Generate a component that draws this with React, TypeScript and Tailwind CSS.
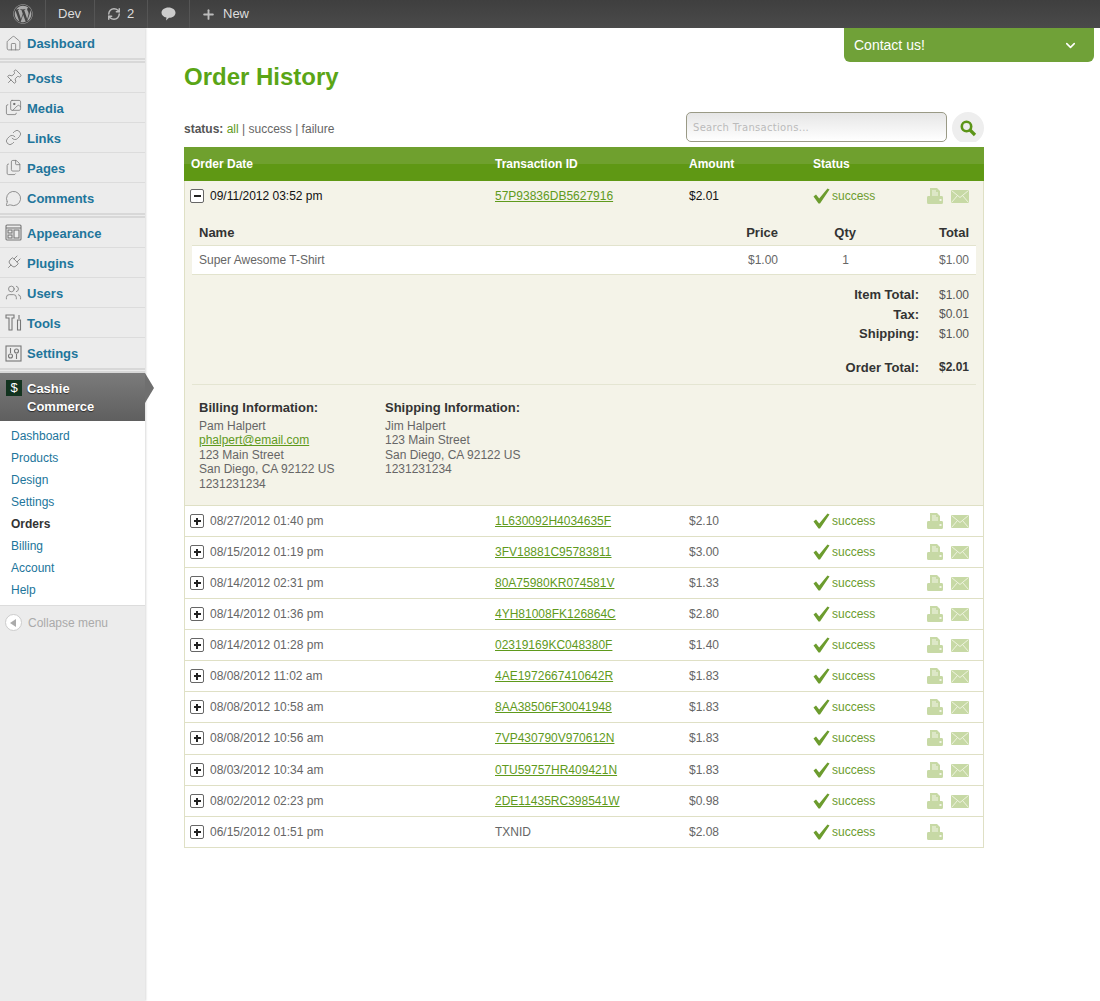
import { FC, ReactNode } from "react";
import {
  ChevronDown, Plus, RefreshCw, House, Pin, Images, Link, Files, MessageCircle, Plug, Users,
} from "lucide-react";
import { FaWordpress } from "react-icons/fa";

const orders = [
  { date: "08/27/2012 01:40 pm", id: "1L630092H4034635F", amount: "$2.10" },
  { date: "08/15/2012 01:19 pm", id: "3FV18881C95783811", amount: "$3.00" },
  { date: "08/14/2012 02:31 pm", id: "80A75980KR074581V", amount: "$1.33" },
  { date: "08/14/2012 01:36 pm", id: "4YH81008FK126864C", amount: "$2.80" },
  { date: "08/14/2012 01:28 pm", id: "02319169KC048380F", amount: "$1.40" },
  { date: "08/08/2012 11:02 am", id: "4AE1972667410642R", amount: "$1.83" },
  { date: "08/08/2012 10:58 am", id: "8AA38506F30041948", amount: "$1.83" },
  { date: "08/08/2012 10:56 am", id: "7VP430790V970612N", amount: "$1.83", tall: true },
  { date: "08/03/2012 10:34 am", id: "0TU59757HR409421N", amount: "$1.83" },
  { date: "08/02/2012 02:23 pm", id: "2DE11435RC398541W", amount: "$0.98" },
  { date: "06/15/2012 01:51 pm", id: "TXNID", amount: "$2.08", plain: true },
];

const AppearanceIcon = () => (
  <svg width="17" height="17" viewBox="0 0 17 17" fill="none" stroke="#777" strokeWidth="1.1">
    <rect x="1" y="1" width="15" height="15" rx="1" />
    <path d="M1 4 H16" />
    <rect x="3" y="6" width="4" height="3" />
    <rect x="3" y="11" width="4" height="3" />
    <rect x="9" y="6" width="5" height="8" />
  </svg>
);

const ToolsIcon = () => (
  <svg width="17" height="17" viewBox="0 0 17 17" fill="none" stroke="#777" strokeWidth="1.1">
    <path d="M1 1 H9 V4 H7 V16 H4 V4 H1 Z" />
    <path d="M14 1 V5 M12.5 6 H15.5 V16 H12.5 Z" />
  </svg>
);

const SettingsIcon = () => (
  <svg width="17" height="17" viewBox="0 0 17 17" fill="none" stroke="#777" strokeWidth="1.1">
    <rect x="1" y="1" width="15" height="15" />
    <path d="M5.5 3 V8 M11.5 9 V14" />
    <circle cx="5.5" cy="11" r="2" />
    <circle cx="11.5" cy="6" r="2" />
  </svg>
);

const iconProps = { size: 17, strokeWidth: 1.1, color: "#777" };

const menuGroups: { label: string; icon: ReactNode }[][] = [
  [{ label: "Dashboard", icon: <House {...iconProps} /> }],
  [
    { label: "Posts", icon: <Pin {...iconProps} className="rotate-45" /> },
    { label: "Media", icon: <Images {...iconProps} /> },
    { label: "Links", icon: <Link {...iconProps} /> },
    { label: "Pages", icon: <Files {...iconProps} /> },
    { label: "Comments", icon: <MessageCircle {...iconProps} /> },
  ],
  [
    { label: "Appearance", icon: <AppearanceIcon /> },
    { label: "Plugins", icon: <Plug {...iconProps} className="rotate-45" /> },
    { label: "Users", icon: <Users {...iconProps} /> },
    { label: "Tools", icon: <ToolsIcon /> },
    { label: "Settings", icon: <SettingsIcon /> },
  ],
];

const subMenu = ["Dashboard", "Products", "Design", "Settings", "Orders", "Billing", "Account", "Help"];

const CheckIcon = () => (
  <svg width="17" height="16" viewBox="0 0 17 16" className="shrink-0">
    <path d="M0.5 8.5 L3 6.5 L6.2 10.5 L14.5 0.5 L16.5 1.5 L7 15.5 L5.5 15.5 Z" fill="#6c9c2e" />
  </svg>
);

const PrintIcon = () => (
  <svg width="16" height="16" viewBox="0 0 16 16" className="shrink-0">
    <path d="M3 0 H10 L13 3 V8 H15 Q16 8 16 9.5 V14.5 Q16 16 14.5 16 H1.5 Q0 16 0 14.5 V9.5 Q0 8 1 8 H3 Z" fill="#c7d9a5" />
    <path d="M5 3 H9 M5 5 H11 M5 7 H11" stroke="#f3f6e8" strokeWidth="1" />
    <rect x="12.5" y="11" width="2" height="2" fill="#f3f6e8" />
  </svg>
);

const MailIcon = () => (
  <svg width="18" height="13" viewBox="0 0 18 13" className="shrink-0">
    <rect width="18" height="13" fill="#c7d9a5" />
    <path d="M0.5 0.5 L9 7.5 L17.5 0.5 M0.5 12.5 L6.5 5.5 M17.5 12.5 L11.5 5.5" stroke="#eef3df" strokeWidth="1" fill="none" />
  </svg>
);

const ToggleBox: FC<{ open?: boolean }> = ({ open }) => (
  <span className="w-[14px] h-[14px] shrink-0 border border-[#666] rounded-[2px] bg-white flex items-center justify-center">
    <span className="relative w-[7px] h-[2px] bg-[#222]">
      {!open && <span className="absolute left-[2.5px] top-[-2.5px] w-[2px] h-[7px] bg-[#222]" />}
    </span>
  </span>
);

const OrderCells: FC<{ date: string; id: string; amount: string; open?: boolean; plain?: boolean; noMail?: boolean }> = ({ date, id, amount, open, plain, noMail }) => (
  <>
    <div className="w-[305px] flex items-center gap-[6px]">
      <ToggleBox open={open} />
      <span className={open ? "text-[#111]" : "text-[#666]"}>{date}</span>
    </div>
    <div className="w-[194px]">
      {plain ? <span className="text-[#666]">{id}</span> : <a className="text-[#5f9a1c] underline">{id}</a>}
    </div>
    <div className={open ? "w-[124px] text-[#111]" : "w-[124px] text-[#666]"}>{amount}</div>
    <div className="w-[114px] flex items-center gap-[2px] text-[#6c9c2e]">
      <CheckIcon />
      <span>success</span>
    </div>
    <div className="flex items-center gap-[8px]">
      <PrintIcon />
      {!noMail && <MailIcon />}
    </div>
  </>
);

const Line: FC<{ children: ReactNode }> = ({ children }) => <div className="h-[14.4px] leading-[14.4px]">{children}</div>;

const Address: FC<{ title: string; lines: ReactNode[]; width: string }> = ({ title, lines, width }) => (
  <div className={width}>
    <div className="font-bold text-[13px] leading-[15px] text-[#333] mb-[4px]">{title}</div>
    {lines.map((l, i) => <Line key={i}>{l}</Line>)}
  </div>
);

const TotalRow: FC<{ label: string; value: string; bold?: boolean; className?: string }> = ({ label, value, bold, className }) => (
  <div className={`flex h-[19.5px] items-center ${className ?? ""}`}>
    <span className="w-[727px] text-right font-bold text-[#333] text-[13px]">{label}</span>
    <span className={bold ? "ml-[20px] font-bold text-[#333]" : "ml-[20px] text-[#555]"}>{value}</span>
  </div>
);

const Sidebar = () => (
  <aside className="w-[145px] shrink-0 bg-[#ececec] shadow-[1px_0_2px_rgba(0,0,0,0.15)] relative z-10">
    {menuGroups.map((group, g) => (
      <div key={g} className="border-b-[5px] border-double border-[#d8d8d8]">
        {group.map(({ label, icon }, i) => (
          <div key={label} className={i < group.length - 1 ? "h-[30px] flex items-center pl-[5px] gap-[5px] border-b border-[#dcdcdc]" : "h-[30px] flex items-center pl-[5px] gap-[5px]"}>
            {icon}
            <span className="pt-[2px] text-[13px] font-bold text-[#21759b]">{label}</span>
          </div>
        ))}
      </div>
    ))}
    <div className="relative h-[48px] bg-gradient-to-b from-[#7b7b7b] to-[#5f5f5f] flex pl-[6px] pt-[7px] gap-[5px]">
      <span className="w-[16px] h-[16px] bg-[#12331f] text-white text-[13px] leading-[16px] text-center">$</span>
      <span className="text-[13px] font-bold leading-[18px] text-white [text-shadow:0_1px_1px_rgba(0,0,0,0.6)]">Cashie<br />Commerce</span>
      <span className="absolute left-[145px] top-0 w-[9px] h-[30px] bg-[#6f6f6f] [clip-path:polygon(0_0,100%_50%,0_100%)]" />
    </div>
    <div className="bg-white pt-[4px] pb-[4px] border-b border-[#dcdcdc]">
      {subMenu.map((s) => (
        <div key={s} className={s === "Orders" ? "h-[22px] leading-[22px] pl-[11px] text-[12px] font-bold text-[#333]" : "h-[22px] leading-[22px] pl-[11px] text-[12px] text-[#21759b]"}>{s}</div>
      ))}
    </div>
    <div className="h-[33px] flex items-center pl-[5px] gap-[6px] text-[12px] text-[#aaa]">
      <span className="w-[17px] h-[17px] rounded-full border border-[#ccc] bg-white flex items-center justify-center">
        <svg width="7" height="8" viewBox="0 0 7 8"><path d="M6 0 V8 L0 4 Z" fill="#aaa" /></svg>
      </span>
      Collapse menu
    </div>
  </aside>
);

const TopBar = () => (
  <header className="h-[28px] bg-gradient-to-b from-[#3f3f3f] to-[#4a4a4a] flex text-[#ddd] text-[13px]">
    <div className="w-[46px] flex items-center justify-center border-r border-[#555]">
      <FaWordpress size={20} color="#aaa" />
    </div>
    <div className="w-[49px] flex items-center pl-[12px] border-r border-[#555]">Dev</div>
    <div className="w-[53px] flex items-center pl-[12px] gap-[6px] border-r border-[#555]">
      <RefreshCw size={14} strokeWidth={2.5} color="#bbb" />2
    </div>
    <div className="w-[42px] flex items-center justify-center border-r border-[#555]">
      <svg width="15" height="14" viewBox="0 0 15 14"><path d="M7.5 0.5 C11.5 0.5 14.5 2.8 14.5 5.7 C14.5 8.6 11.5 10.8 8 10.8 L5 13.5 L5.5 10.5 C2.5 10 0.5 8 0.5 5.7 C0.5 2.8 3.5 0.5 7.5 0.5 Z" fill="#ccc" /></svg>
    </div>
    <div className="flex items-center pl-[11px] gap-[6px]">
      <Plus size={15} strokeWidth={3} color="#bbb" />
      <span className="pl-[1px]">New</span>
    </div>
  </header>
);

export default function App() {
  return (
    <div className="min-h-screen relative bg-white font-['Liberation_Sans',Arial,sans-serif] text-[12px] overflow-hidden">
      <TopBar />
      <div className="absolute right-[6px] top-[28px] w-[250px] h-[34px] bg-[#70a138] rounded-b-[6px] flex items-center justify-between pl-[10px] pr-[16px] text-white text-[14px]">
        <span className="pt-[1px]">Contact us!</span>
        <ChevronDown size={15} strokeWidth={2.5} />
      </div>
      <div className="flex min-h-[973px]">
        <Sidebar />
        <main className="pl-[39px] w-[839px]">
          <h1 className="mt-[34px] h-[30px] leading-[30px] text-[24px] font-bold text-[#5aa516]">Order History</h1>
          <div className="mt-[20px] flex items-center justify-between h-[30px]">
            <div className="text-[#666] pt-[3px]">
              <b className="text-[#555]">status:</b> <span className="text-[#5f9a1c]">all</span> | success | failure
            </div>
            <div className="flex items-center gap-[5px]">
              <div className="w-[261px] h-[30px] border border-[#9a9a86] rounded-[5px] bg-gradient-to-b from-[#e6e6e6] to-white flex items-center pl-[6px] tracking-[0.3px] text-[#bbb] font-['DejaVu_Sans',sans-serif]">
                <span className="text-[10px]">Search Transactions...</span>
              </div>
              <div className="w-[32px] h-[30px] overflow-hidden">
                <div className="w-[32px] h-[32px] rounded-full bg-[#eeeeee] flex items-center justify-center">
                  <svg width="17" height="17" viewBox="0 0 17 17">
                    <circle cx="6.5" cy="6.5" r="4.7" fill="none" stroke="#5c9518" strokeWidth="2.6" />
                    <path d="M10 10 L15 15" stroke="#5c9518" strokeWidth="3.2" />
                  </svg>
                </div>
              </div>
            </div>
          </div>
          <div className="mt-[5px] border-x border-b border-[#dfe0c5]">
            <div className="-mx-px h-[34px] flex items-center pl-[7px] font-bold text-white bg-[linear-gradient(#6fa02e_0,#6fa02e_50%,#5f9814_50%,#5f9814_100%)]">
              <div className="w-[304px]">Order Date</div>
              <div className="w-[194px]">Transaction ID</div>
              <div className="w-[124px]">Amount</div>
              <div>Status</div>
            </div>
            <div className="bg-[#f4f3e8] border-b border-[#dfe0c5] h-[325px] px-[7px]">
              <div className="h-[30px] flex items-center -ml-[2px]">
                <OrderCells date="09/11/2012 03:52 pm" id="57P93836DB5627916" amount="$2.01" open />
              </div>
              <div className="h-[34px] flex items-start pt-[14px] pl-[7px] pr-[7px] font-bold text-[13px] leading-[15px] text-[#333]">
                <div className="w-[547px]">Name</div>
                <div className="w-[32px] text-right">Price</div>
                <div className="w-[78px] text-right">Qty</div>
                <div className="flex-1 text-right">Total</div>
              </div>
              <div className="h-[30px] bg-white border-y border-[#e2e3cd] flex items-center pl-[7px] pr-[7px] text-[#666]">
                <div className="w-[547px]">Super Awesome T-Shirt</div>
                <div className="w-[32px] text-right">$1.00</div>
                <div className="w-[71px] text-right">1</div>
                <div className="flex-1 text-right">$1.00</div>
              </div>
              <div className="pt-[10px] h-[110px] border-b border-[#e4e5d2]">
                <TotalRow label="Item Total:" value="$1.00" />
                <TotalRow label="Tax:" value="$0.01" />
                <TotalRow label="Shipping:" value="$1.00" />
                <TotalRow label="Order Total:" value="$2.01" bold className="mt-[14px]" />
              </div>
              <div className="flex pl-[7px] pt-[15px] text-[#666]">
                <Address
                  width="w-[186px]"
                  title="Billing Information:"
                  lines={["Pam Halpert", <a className="text-[#5f9a1c] underline">phalpert@email.com</a>, "123 Main Street", "San Diego, CA 92122 US", "1231231234"]}
                />
                <Address
                  width="w-[186px]"
                  title="Shipping Information:"
                  lines={["Jim Halpert", "123 Main Street", "San Diego, CA 92122 US", "1231231234"]}
                />
              </div>
            </div>
            {orders.map((o, i) => (
              <div key={o.date + o.id} className={`${o.tall ? "h-[32px] pb-[1px]" : i === orders.length - 1 ? "h-[30px]" : "h-[31px]"} flex items-center pl-[5px] ${i < orders.length - 1 ? "border-b border-[#dfe0c5]" : ""}`}>
                <OrderCells date={o.date} id={o.id} amount={o.amount} plain={o.plain} noMail={o.plain} />
              </div>
            ))}
          </div>
        </main>
      </div>
    </div>
  );
}
